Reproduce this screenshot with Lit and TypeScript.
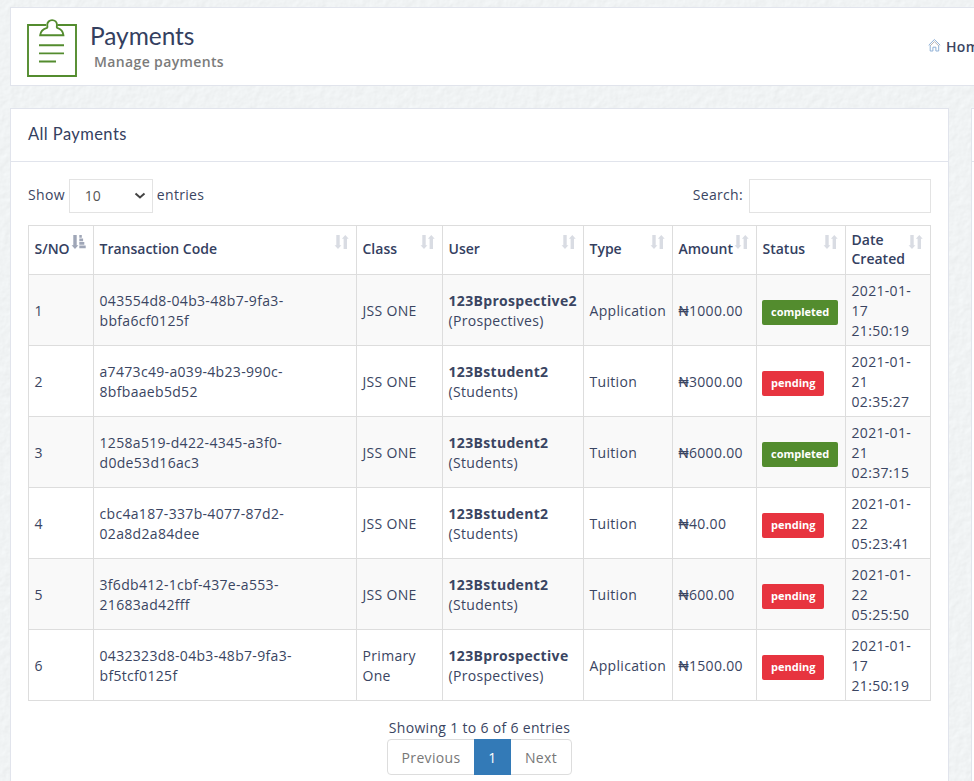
import { LitElement, html, css, svg } from "lit";
import { customElement } from "lit/decorators.js";

type Payment = { code: [string, string]; cls: string; user: string; role: string; type: string; amount: string; status: string; date: [string, string, string] };

const payments: Payment[] = [
  { code: ["043554d8-04b3-48b7-9fa3-", "bbfa6cf0125f"], cls: "JSS ONE", user: "123Bprospective2", role: "(Prospectives)", type: "Application", amount: "1000.00", status: "completed", date: ["2021-01-", "17", "21:50:19"] },
  { code: ["a7473c49-a039-4b23-990c-", "8bfbaaeb5d52"], cls: "JSS ONE", user: "123Bstudent2", role: "(Students)", type: "Tuition", amount: "3000.00", status: "pending", date: ["2021-01-", "21", "02:35:27"] },
  { code: ["1258a519-d422-4345-a3f0-", "d0de53d16ac3"], cls: "JSS ONE", user: "123Bstudent2", role: "(Students)", type: "Tuition", amount: "6000.00", status: "completed", date: ["2021-01-", "21", "02:37:15"] },
  { code: ["cbc4a187-337b-4077-87d2-", "02a8d2a84dee"], cls: "JSS ONE", user: "123Bstudent2", role: "(Students)", type: "Tuition", amount: "40.00", status: "pending", date: ["2021-01-", "22", "05:23:41"] },
  { code: ["3f6db412-1cbf-437e-a553-", "21683ad42fff"], cls: "JSS ONE", user: "123Bstudent2", role: "(Students)", type: "Tuition", amount: "600.00", status: "pending", date: ["2021-01-", "22", "05:25:50"] },
  { code: ["0432323d8-04b3-48b7-9fa3-", "bf5tcf0125f"], cls: "Primary One", user: "123Bprospective", role: "(Prospectives)", type: "Application", amount: "1500.00", status: "pending", date: ["2021-01-", "17", "21:50:19"] },
];

const columns = ["S/NO", "Transaction Code", "Class", "User", "Type", "Amount", "Status", "Date Created"];

const arrowDown = svg`<path d="M1.3 0h3.4v10.2h1.7L3 14-.4 10.2h1.7z"/>`;
const sortBoth = html`<svg class="sort" viewBox="0 0 14 15" width="14" height="15">
  ${arrowDown}<path d="M8.6 14V3.8H6.9L10.3 0l3.4 3.8H12V14z"/></svg>`;
const sortAsc = html`<svg class="sort on" viewBox="0 0 14 15" width="14" height="15">
  ${arrowDown}<path d="M7.3 0h2.5v2.8H7.3zM7.3 3.6h3.8v2.7H7.3zM7.3 7.1h5v2.7h-5zM7.3 10.6h6.4v2.7H7.3z"/></svg>`;

@customElement("app-root")
export class AppRoot extends LitElement {
  static styles = css`
    :host { display: block; position: relative; width: 974px; height: 781px; overflow: hidden; background: #f0f3f4;
      font: 14px/20px "Open Sans", sans-serif; color: #3a4562; letter-spacing: .32px; }
    * { box-sizing: border-box; }
    .paper { position: absolute; inset: 0; width: 100%; height: 100%; }
    .page { position: relative; padding: 7px 0 0 10px; }
    .head { height: 79px; background: #fff; border: 1px solid #e1e4ec; border-right: 0; display: flex; padding: 11px 0 0 16px; }
    .clip { flex: none; display: block; }
    .titles { margin-left: 13px; padding-top: 1px; flex: 1; white-space: nowrap; }
    .title, .caption { font-family: Lato, sans-serif; margin: 0; font-weight: 400; color: #34405f; }
    .title { font-size: 24.5px; line-height: 32px; letter-spacing: -.05px; }
    .sub { margin: 0 0 0 4px; font-weight: 600; color: #7b7b7b; line-height: 20px; letter-spacing: .37px; }
    .crumb { width: 46px; overflow: hidden; display: flex; padding-top: 18px; font-weight: 600; white-space: nowrap; }
    .crumb svg { flex: none; margin: 1px 5px 0 0; }
    .cols { display: flex; gap: 22px; margin-top: 22px; }
    .panel { flex: none; width: 939px; height: 700px; background: #fff; border: 1px solid #e1e4ec; }
    .caption { height: 53px; border-bottom: 1px solid #e1e4ec; padding: 15px 17px; font-size: 16.5px; line-height: 20px; letter-spacing: .42px; }
    .body { padding: 17px 17px 0; }
    .tools { display: flex; height: 34px; white-space: nowrap; line-height: 32px; }
    .select { width: 84px; height: 34px; margin: 0 4px; border: 1px solid #e3e3e3; display: flex; align-items: center; justify-content: space-between; padding: 0 6px 0 15px; color: #555; letter-spacing: 0; }
    .search { margin-left: auto; }
    .input { width: 182px; height: 34px; margin-left: 6px; border: 1px solid #e3e3e3; }
    table { width: 902px; margin-top: 12px; border-collapse: collapse; table-layout: fixed; }
    th, td { border: 1px solid #ddd; padding: 0 5px 0 5.5px; text-align: left; vertical-align: middle; }
    th { height: 49px; font-weight: 600; line-height: 18.6px; position: relative; letter-spacing: 0; padding-bottom: 2px; color: #34405f; }
    th:last-child { padding-bottom: 0; }
    td { height: 71px; white-space: nowrap; padding-top: 1px; }
    td.wrap { white-space: normal; }
    td.state { padding-left: 5px; padding-top: 1.5px; }
    tbody tr:nth-child(odd) { background: #f9f9f9; }
    b { font-weight: 700; }
    .c0 { width: 65px; } .c1 { width: 263px; } .c2 { width: 86px; } .c3 { width: 141px; }
    .c4 { width: 89px; } .c5 { width: 84px; } .c6 { width: 89px; } .c7 { width: 85px; }
    .sort { position: absolute; right: 7px; top: 9px; fill: #d9dce3; overflow: visible; }
    .on { fill: #9fa6b7; }
    .badge { display: inline-block; vertical-align: middle; height: 25px; margin-top: 3px; border-radius: 2px; padding: 0 9px; font-weight: 700; font-size: 11px; line-height: 24px; letter-spacing: 0; color: #fff; }
    .completed { background: #538c2e; } .pending { background: #e7343f; }
    .info { text-align: center; margin-top: 17px; }
    .pager { display: flex; width: 185px; height: 36px; margin: 1px auto 0; border: 1px solid #ddd; border-radius: 4px; line-height: 35px; color: #777; }
    .prev { width: 86px; text-align: center; } .next { flex: 1; text-align: center; }
    .cur { width: 37px; margin: -1px 0; line-height: 37px; background: #337ab7; color: #fff; text-align: center; }
  `;

  render() {
    return html`
      <svg class="paper" aria-hidden="true">
        <filter id="grain" x="0" y="0" width="100%" height="100%" color-interpolation-filters="sRGB">
          <feTurbulence type="fractalNoise" baseFrequency="0.13" numOctaves="3" seed="4" result="n"/>
          <feDiffuseLighting in="n" lighting-color="#f0f3f4" surfaceScale="0.14" diffuseConstant="1.132"><feDistantLight azimuth="225" elevation="62"/></feDiffuseLighting>
        </filter>
        <rect width="100%" height="100%" filter="url(#grain)"/>
      </svg>
      <div class="page">
        <header class="head">
          <svg class="clip" width="50" height="58" viewBox="0 0 50 58" fill="none" stroke="#538c2e" stroke-width="1.9">
            <path d="M19 6H1v51h48V6H30.5"/>
            <path d="M13.2 16.2c.4-4.2 3.1-6.2 6.8-7.3.9-.6.3-1.3.2-2.9a4.9 4.9 0 0 1 9.8 0c-.1 1.6-.7 2.3.2 2.9 3.7 1.1 5.8 3.1 6.2 7.3z"/>
            <path d="M12 26.2h25M12 34.4h25M12 42.5h17"/>
          </svg>
          <div class="titles"><h1 class="title">Payments</h1><p class="sub">Manage payments</p></div>
          <div class="crumb">
            <svg width="13" height="14" viewBox="0 0 13 14" fill="none" stroke="#8fb0d6"><path d="M.7 7.2 6.4 1.5l5.8 5.7M2.2 7v6h2.7V9.2h3V13h2.8V7"/><path d="M2.2 7.8 6.4 3.6l4.3 4.2" stroke="#bbb5b5"/></svg>
            <span>Home</span>
          </div>
        </header>
        <div class="cols">
          <section class="panel">
            <h2 class="caption">All Payments</h2>
            <div class="body">
              <div class="tools">
                <span>Show</span>
                <div class="select"><span>10</span><svg width="12" height="8" viewBox="0 0 12 8" fill="none" stroke="#444" stroke-width="2"><path d="m1.5 1.5 4.5 4 4.5-4"/></svg></div>
                <span>entries</span><span class="search">Search:</span><div class="input"></div>
              </div>
              <table>
                <colgroup>${columns.map((_, i) => html`<col class="c${i}">`)}</colgroup>
                <thead><tr>${columns.map((c, i) => html`<th>${c}${i ? sortBoth : sortAsc}</th>`)}</tr></thead>
                <tbody>${payments.map((p, i) => html`<tr>
                  <td>${i + 1}</td><td>${p.code[0]}<br>${p.code[1]}</td><td class="wrap">${p.cls}</td>
                  <td><b>${p.user}</b><br>${p.role}</td><td>${p.type}</td><td>₦${p.amount}</td>
                  <td class="state"><span class="badge ${p.status}">${p.status}</span></td>
                  <td>${p.date[0]}<br>${p.date[1]}<br>${p.date[2]}</td></tr>`)}</tbody>
              </table>
              <div class="info">Showing 1 to 6 of 6 entries</div>
              <div class="pager"><span class="prev">Previous</span><span class="cur">1</span><span class="next">Next</span></div>
            </div>
          </section>
          <section class="panel"><h2 class="caption"></h2></section>
        </div>
      </div>`;
  }
}
